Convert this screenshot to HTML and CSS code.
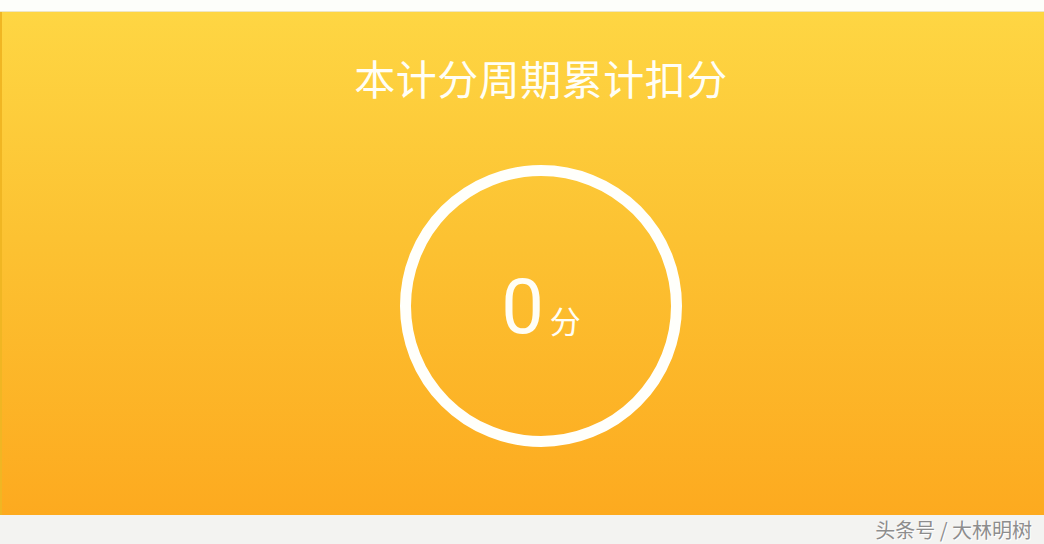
FILE: index.html
```html
<!DOCTYPE html>
<html lang="zh">
<head>
<meta charset="utf-8">
<link rel="stylesheet" href="styles.css">
</head>
<body>
<div class="top-strip"></div>
<main class="panel">
  <h1 class="title">本计分周期累计扣分</h1>
  <div class="ring">
    <span class="num">0</span><span class="unit">分</span>
  </div>
</main>
<footer class="foot">
  <span class="mark">头条号 / 大林明树</span>
</footer>
</body>
</html>
```

FILE: styles.css
```css
html, body {
  margin: 0;
  padding: 0;
  width: 1044px;
  height: 544px;
  overflow: hidden;
  background: #f3f3f1;
  font-family: "Noto Sans CJK SC", "Noto Sans", sans-serif;
}
.top-strip {
  height: 11px;
  background: #fdfefa;
  border-bottom: 1px solid #eee6c4;
}
.panel {
  height: 503px;
  box-sizing: border-box;
  background: linear-gradient(180deg, #fed643 0%, #fcc232 45%, #fdaa1f 100%);
  border-left: 2px solid #f0b623;
  padding-left: 36px;
  padding-top: 41px;
  display: flex;
  flex-direction: column;
  align-items: center;
}
.title {
  margin: 0;
  color: #fffef6;
  font-weight: 400;
  font-size: 41px;
  line-height: 48px;
  letter-spacing: 0.5px;
}
.ring {
  margin-top: 64px;
  width: 282px;
  height: 282px;
  box-sizing: border-box;
  border: 11px solid #fffffb;
  border-radius: 50%;
  display: flex;
  align-items: baseline;
  justify-content: center;
  padding-top: 86px;
  color: #fffef6;
}
.num {
  font-family: Roboto, "Noto Sans", sans-serif;
  font-weight: 400;
  font-size: 76px;
  line-height: 90px;
}
.unit {
  font-size: 31px;
  margin-left: 6px;
}
.foot {
  height: 29px;
  background: #f3f3f1;
  display: flex;
  justify-content: flex-end;
  align-items: center;
  padding-right: 12px;
}
.mark {
  font-size: 20px;
  color: #8d8d8d;
  text-shadow: 0 0 1px #ffffff, 1px 1px 0 #ffffff;
}
```
